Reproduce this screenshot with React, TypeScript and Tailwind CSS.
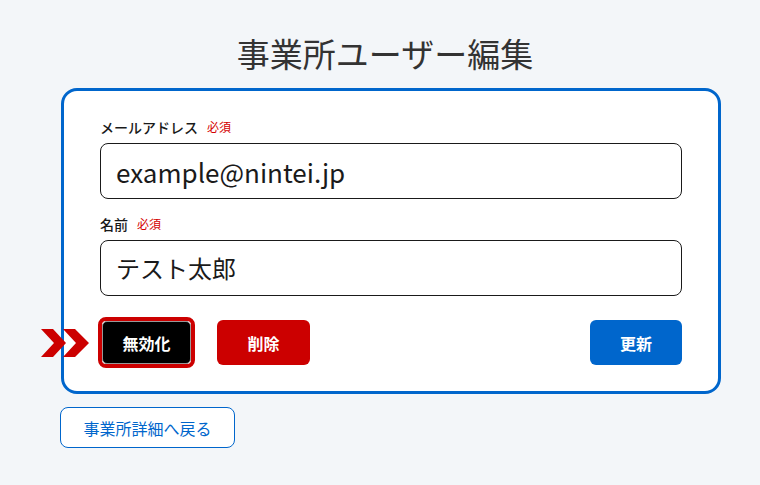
import React from 'react';

const font = { fontFamily: '"Noto Sans CJK JP", "Noto Sans", sans-serif' };

function Chevrons() {
  return (
    <svg width="50" height="28" viewBox="0 0 50 28" className="absolute left-[-57px] top-[12px]">
      <polygon points="0,0 12,0 25,14 12,28 0,28 13,14" fill="#cc0000" />
      <polygon points="22,0 34,0 48,14 34,28 22,28 35,14" fill="#cc0000" />
    </svg>
  );
}

function Field({ label, value, size }: { label: string; value: string; size: string }) {
  return (
    <div className="flex flex-col">
      <div className="flex items-center gap-[9px] h-[20px]">
        <span className="text-[14px] font-medium text-[#1a1a1a]">{label}</span>
        <span className="text-[12px] text-[#d40000]">必須</span>
      </div>
      <div className="mt-[6px] h-[56px] rounded-[8px] border border-[#1a1a1a] bg-white flex items-center px-[15px]">
        <span className={size + ' text-[#1a1a1a]'}>{value}</span>
      </div>
    </div>
  );
}

export default function App() {
  return (
    <div className="min-h-[485px] w-[760px] bg-[#f3f6f9]" style={font}>
      <div className="ml-[61px] w-[660px] pt-[33px]">
        <h1 className="text-center text-[33px] leading-[40px] text-[#333333] pr-[12px]">事業所ユーザー編集</h1>
        <div className="relative mt-[15px] rounded-[16px] border-[3px] border-[#0066cc] bg-white pl-[36px] pr-[36px] pt-[26px] pb-[23px]">
          <Field label="メールアドレス" value="example@nintei.jp" size="text-[26px]" />
          <div className="h-[15px]" />
          <Field label="名前" value="テスト太郎" size="text-[24px]" />
          <div className="mt-[21px] flex items-center">
            <div className="relative ml-[-2px]">
              <Chevrons />
              <div className="rounded-[8px] border-[4px] border-[#cc0000]">
                <button className="block h-[43px] w-[89px] rounded-[5px] border border-[#999] bg-black text-[16px] font-bold text-white">無効化</button>
              </div>
            </div>
            <button className="ml-[22px] h-[45px] w-[93px] rounded-[6px] bg-[#cc0000] text-[16px] font-bold text-white">削除</button>
            <button className="ml-auto h-[45px] w-[92px] rounded-[6px] bg-[#0066cc] text-[16px] font-bold text-white">更新</button>
          </div>
        </div>
        <button className="mt-[13px] ml-[-1px] h-[41px] w-[175px] rounded-[8px] border border-[#0066cc] bg-white text-[16px] text-[#0066cc]">事業所詳細へ戻る</button>
      </div>
    </div>
  );
}
